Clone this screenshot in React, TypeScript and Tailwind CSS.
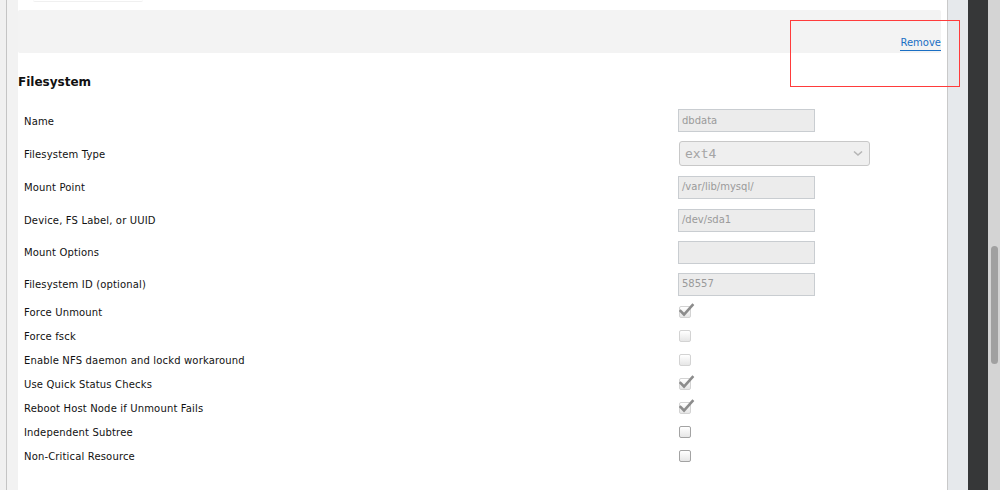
import React from "react";

const font = { fontFamily: '"DejaVu Sans", Verdana, sans-serif' };

function Check({ checked, enabled }: { checked?: boolean; enabled?: boolean }) {
  return (
    <div className="relative w-[12px] h-[12px] ml-[1px] mb-[2px]">
      <div
        className={
          "w-[12px] h-[12px] rounded-[2px] border bg-gradient-to-b from-white to-[#e6e6e6] " +
          (enabled ? "border-[#a3a3a3]" : "border-[#d3d3d3]")
        }
      />
      {checked && (
        <svg className="absolute left-0 top-[-3px]" width="16" height="14" viewBox="0 0 16 14">
          <path d="M1.5 8 L5 11.5 L13.5 2" fill="none" stroke="#8c8c8c" strokeWidth="2.6" strokeLinecap="square" />
        </svg>
      )}
    </div>
  );
}

function TextInput({ value }: { value: string }) {
  return (
    <div className="w-[137px] h-[23px] mb-[2px] bg-[#ececec] border border-[#c9cdd1] flex items-center px-[3px] text-[10px] text-[#9a9a9a] leading-none">
      {value}
    </div>
  );
}

function Row({ label, h, children }: { label: string; h: string; children?: React.ReactNode }) {
  return (
    <div className={"flex items-center " + h}>
      <div className="w-[660px] pl-[6px] text-[10px] tracking-[0.16px] text-[#111] leading-[12px]">{label}</div>
      <div className="flex items-center">{children}</div>
    </div>
  );
}

export default function App() {
  return (
    <div className="relative flex w-[1000px] h-[490px] overflow-hidden bg-white" style={font}>
      {/* left gutter */}
      <div className="w-[6px] bg-[#f0f0f0]" />
      <div className="w-[1px] bg-[#c4c4c4]" />
      <div className="w-[11px] bg-[#f2f2f2]" />

      {/* main content */}
      <div className="w-[929px] flex flex-col bg-white">
        <div className="h-[10px] relative">
          <div className="ml-[15px] w-[110px] h-[2px] rounded-b-[3px] border-b border-[#f0f0f0]" />
        </div>
        <div className="h-[43px] w-[923px] bg-[#f3f3f3] rounded-[2px] flex justify-end items-start pt-[27px]">
          <span className="inline-block text-[10px] leading-[12px] text-[#1a6fc4] border-b border-[#1a6fc4] pb-px">
            Remove
          </span>
        </div>
        <div className="h-[52px] pt-[22px]">
          <div className="text-[12px] font-bold leading-[15px] text-[#111]">Filesystem</div>
        </div>

        <Row label="Name" h="h-[33px]">
          <TextInput value="dbdata" />
        </Row>
        <Row label="Filesystem Type" h="h-[33px]">
          <div className="ml-[1px] mb-[2px] w-[191px] h-[25px] rounded-[3px] bg-[#efefef] border border-[#c8c8c8] flex items-center justify-between pl-[5px] pr-[6px]">
            <span className="text-[13px] text-[#a5a5a5] leading-none" style={{ fontFamily: '"DejaVu Sans Mono", monospace' }}>
              ext4
            </span>
            <svg width="10" height="7" viewBox="0 0 10 7">
              <path d="M1 1.5 L5 5 L9 1.5" fill="none" stroke="#b5b5b5" strokeWidth="1.6" />
            </svg>
          </div>
        </Row>
        <Row label="Mount Point" h="h-[34px]">
          <TextInput value="/var/lib/mysql/" />
        </Row>
        <Row label="Device, FS Label, or UUID" h="h-[32px]">
          <TextInput value="/dev/sda1" />
        </Row>
        <Row label="Mount Options" h="h-[32px]">
          <TextInput value="" />
        </Row>
        <Row label="Filesystem ID (optional)" h="h-[32px]">
          <TextInput value="58557" />
        </Row>
        <Row label="Force Unmount" h="h-[24px]">
          <Check checked />
        </Row>
        <Row label="Force fsck" h="h-[24px]">
          <Check />
        </Row>
        <Row label="Enable NFS daemon and lockd workaround" h="h-[24px]">
          <Check />
        </Row>
        <Row label="Use Quick Status Checks" h="h-[24px]">
          <Check checked />
        </Row>
        <Row label="Reboot Host Node if Unmount Fails" h="h-[24px]">
          <Check checked />
        </Row>
        <Row label="Independent Subtree" h="h-[24px]">
          <Check enabled />
        </Row>
        <Row label="Non-Critical Resource" h="h-[24px]">
          <Check enabled />
        </Row>
      </div>

      {/* right side */}
      <div className="w-[1px] bg-[#c9c9c9]" />
      <div className="w-[20px] bg-[#e6e9ec]" />
      <div className="w-[20px] bg-[#363738]" />
      <div className="w-[12px] bg-[#d4d4d4] relative">
        <div className="absolute left-[3px] top-[246px] w-[7px] h-[118px] rounded-full bg-[#a0a0a0]" />
      </div>

      {/* red highlight overlay */}
      <div className="absolute left-[790px] top-[20px] w-[170px] h-[67px] border border-[#ff3b3b] pointer-events-none" />
    </div>
  );
}
